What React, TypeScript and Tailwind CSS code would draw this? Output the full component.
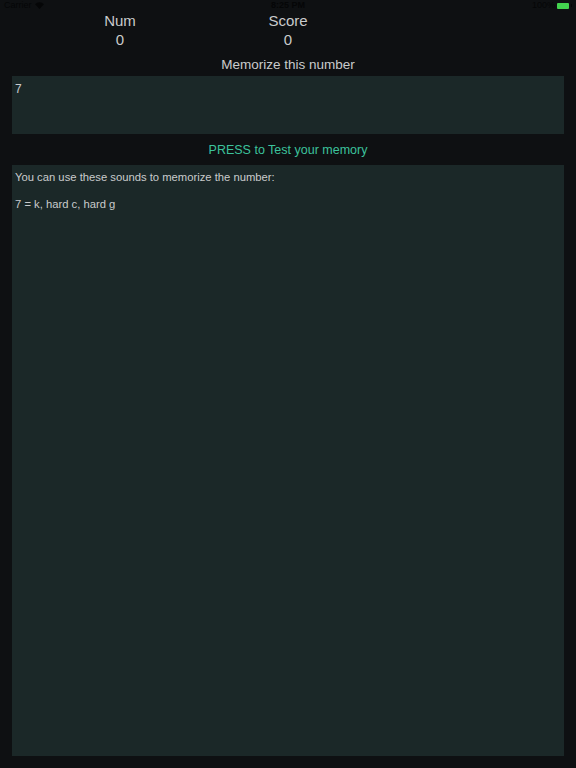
import React from 'react'

const font = { fontFamily: '"Liberation Sans", Arial, sans-serif' }

function StatusBar() {
  return (
    <div className="relative flex h-[11px] items-center justify-between px-[4px] text-[9px] text-[#050607]">
      <span className="flex items-center gap-[3px]">
        Carrier
        <svg width="9" height="7" viewBox="0 0 10 8" fill="#050607">
          <path d="M5 8 L0 2.5 A7 7 0 0 1 10 2.5 Z" />
        </svg>
      </span>
      <span className="absolute left-1/2 -translate-x-1/2 font-semibold">8:25 PM</span>
      <span className="flex items-center gap-[2px]">
        100%
        <span className="h-[6px] w-[12px] rounded-[1px] bg-[#43d34f]" />
        <span className="h-[3px] w-[1px] bg-[#050607]" />
      </span>
    </div>
  )
}

function Stat({ label, value }: { label: string; value: number }) {
  return (
    <div className="flex w-[168px] flex-col items-center text-[15px] leading-[19px] text-[#c9cbcc]">
      <span>{label}</span>
      <span>{value}</span>
    </div>
  )
}

export default function App() {
  return (
    <div className="flex h-[768px] w-[576px] flex-col bg-[#0e1012]" style={font}>
      <StatusBar />
      <div className="flex pl-[36px]">
        <Stat label="Num" value={0} />
        <Stat label="Score" value={0} />
      </div>
      <p className="mt-[7px] text-center text-[13.5px] leading-[17px] text-[#c9cbcc]">
        Memorize this number
      </p>
      <div className="mx-[12px] mt-[3px] h-[58px] bg-[#1b2828] px-[3px] pt-[6px] text-[12px] leading-[15px] text-[#c9cbcc]">
        7
      </div>
      <p className="mt-[8px] text-center text-[12.5px] leading-[17px] text-[#3cc29c]">
        PRESS to Test your memory
      </p>
      <div className="mx-[12px] mt-[6px] h-[591px] bg-[#1b2828] px-[3px] pt-[6px] text-[11.25px] leading-[13px] text-[#c9cbcc]">
        <p>You can use these sounds to memorize the number:</p>
        <p className="mt-[14px]">7 = k, hard c, hard g</p>
      </div>
    </div>
  )
}
